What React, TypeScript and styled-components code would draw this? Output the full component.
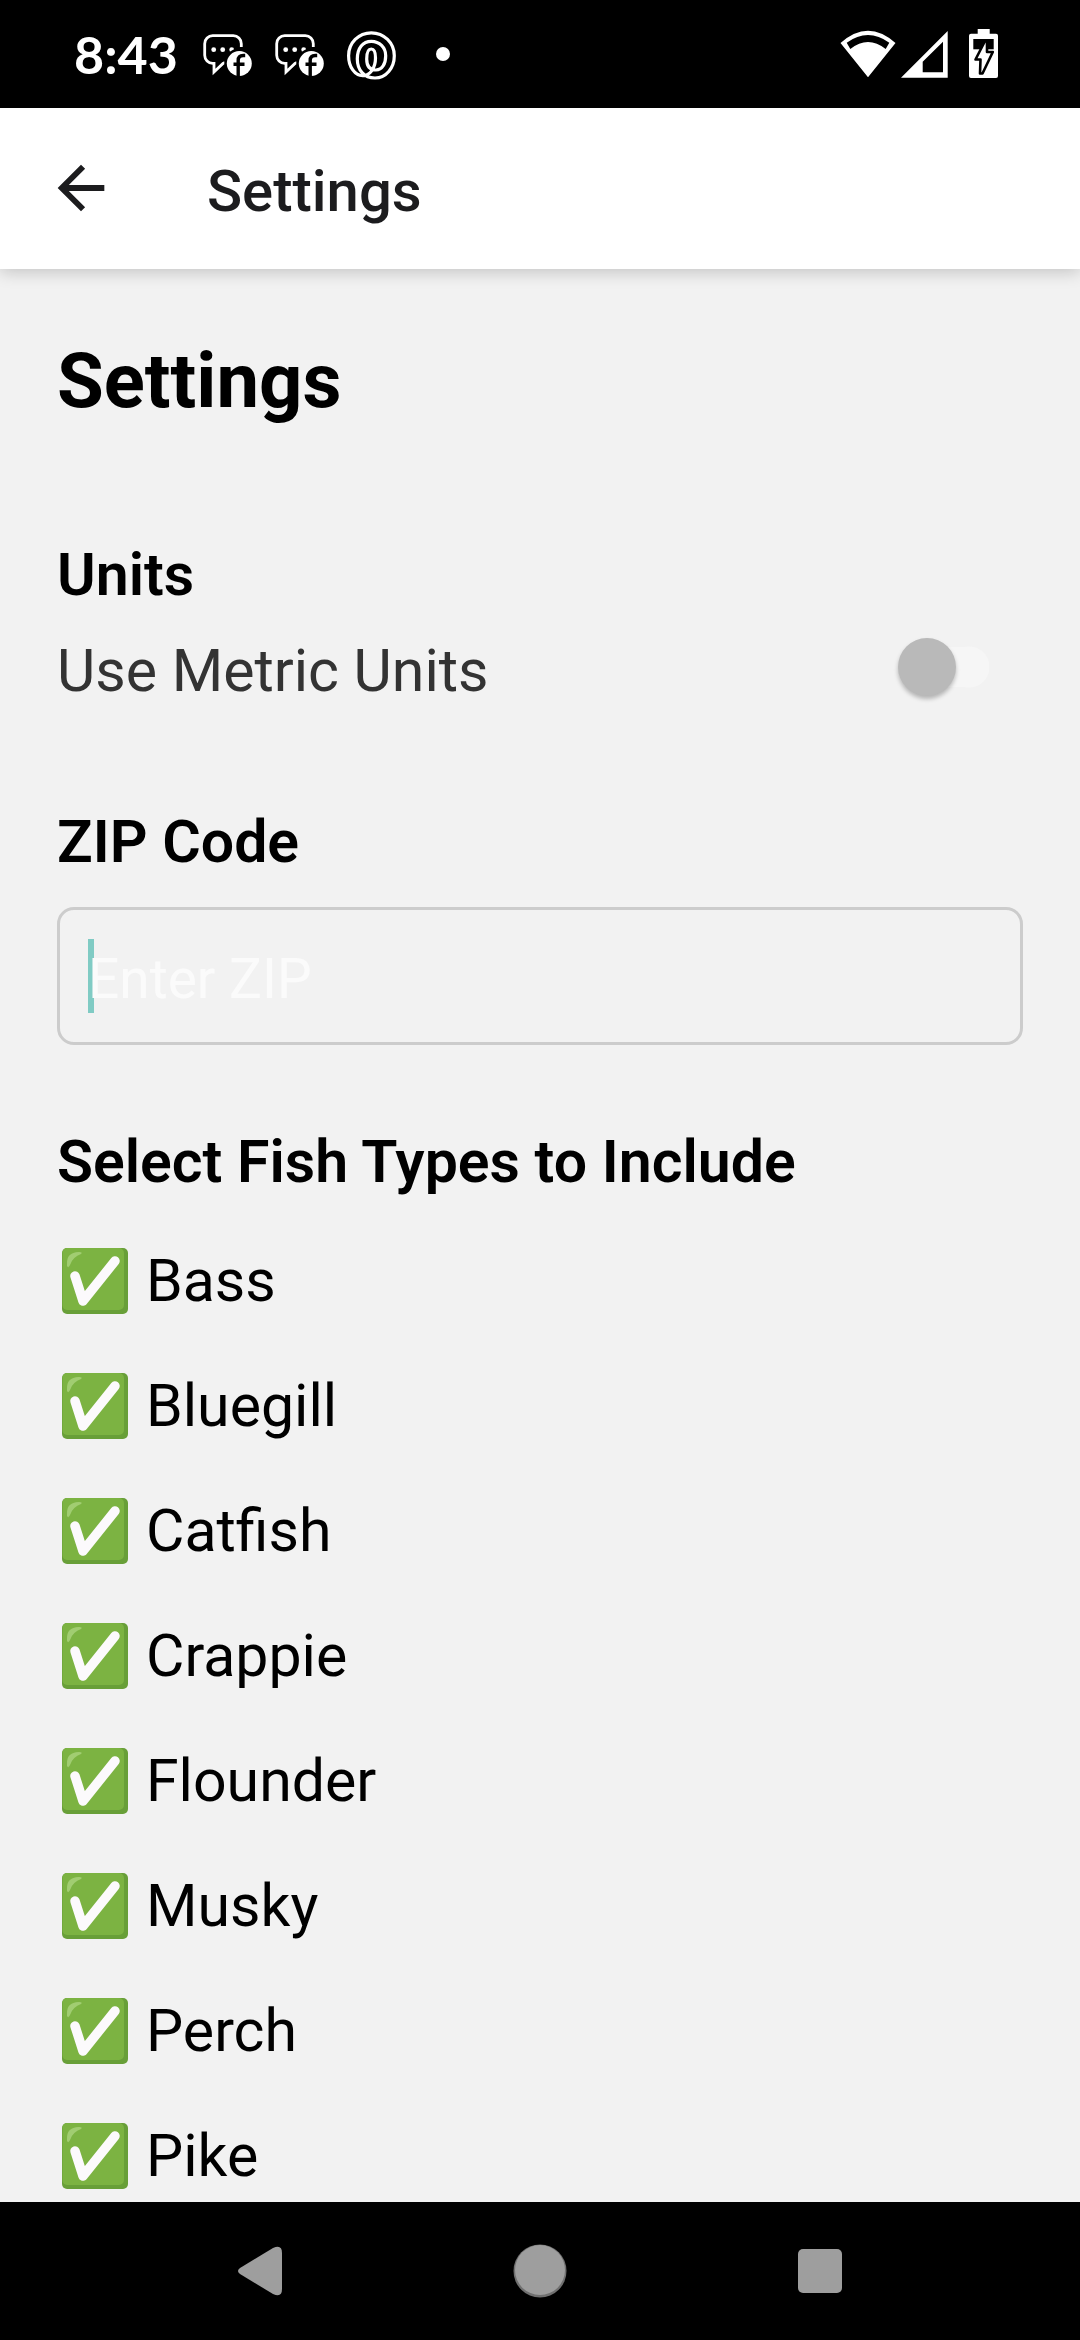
import React, { useState } from "react";
import styled, { createGlobalStyle } from "styled-components";

const GlobalStyle = createGlobalStyle`
  *, *::before, *::after { box-sizing: border-box; }
  body {
    margin: 0;
    background: #f2f2f2;
    font-family: Roboto, "Noto Sans", sans-serif;
  }
  h1, h2, p, ul { margin: 0; padding: 0; }
  svg { display: block; overflow: visible; }
`;

const Screen = styled.div`
  display: flex;
  flex-direction: column;
  min-height: 100vh;
`;

const StatusBar = styled.div`
  display: flex;
  align-items: center;
  justify-content: space-between;
  height: 108px;
  padding: 0 82px 0 74px;
  background: #000;
  color: #fff;
`;

const StatusGroup = styled.div<{ $gap: number }>`
  display: flex;
  align-items: center;
  gap: ${(p) => p.$gap}px;
`;

const Clock = styled.span`
  width: 106px;
  font: 700 52px/60px Lato, Roboto, sans-serif;
  white-space: nowrap;
`;

const MoreDot = styled.span`
  width: 14px;
  height: 14px;
  margin-left: 17px;
  border-radius: 50%;
  background: #fff;
`;

const Header = styled.header`
  display: flex;
  align-items: flex-start;
  gap: 91px;
  height: 161px;
  padding: 40px 46px 0;
  background: #fff;
  color: #1c1c1e;
  box-shadow: 0 3px 16px rgba(0, 0, 0, 0.2);
  z-index: 1;
`;

const IconButton = styled.button`
  display: flex;
  align-items: center;
  justify-content: center;
  height: 80px;
  padding: 0;
  border: 0;
  background: none;
  color: inherit;
`;

const HeaderTitle = styled.p`
  font-size: 58px;
  font-weight: 500;
  line-height: 86px;
`;

const Content = styled.main`
  flex: 1;
  padding: 57px 57px 0;
  color: #000;
`;

const PageTitle = styled.h1`
  font-size: 76px;
  font-weight: 700;
  line-height: 110px;
`;

const Section = styled.section<{ $top: number }>`
  display: flex;
  flex-direction: column;
  margin-top: ${(p) => p.$top}px;
`;

const SectionTitle = styled.h2`
  font-size: 59px;
  font-weight: 600;
  line-height: 70px;
`;

const SettingRow = styled.label`
  display: flex;
  align-items: flex-start;
  justify-content: space-between;
  margin-top: 26px;
  padding-right: 34px;
  color: #333;
  font-size: 59px;
  line-height: 70px;
`;

const Switch = styled.input`
  appearance: none;
  display: flex;
  align-items: center;
  width: 91px;
  height: 62px;
  margin: 0;
  background: radial-gradient(circle at 71px 31px, #f6f6f6 20px, transparent 21px),
    linear-gradient(#f6f6f6, #f6f6f6) 20px 11px / 51px 40px no-repeat;

  &::before {
    content: "";
    width: 58px;
    height: 58px;
    border-radius: 50%;
    background: #b9b9b9;
    box-shadow: 0 3px 4px rgba(0, 0, 0, 0.25);
  }

  &:checked::before {
    margin-left: auto;
    background: #009688;
  }
`;

const Field = styled.div`
  position: relative;
  margin-top: 30px;
`;

const Caret = styled.span`
  position: absolute;
  top: 32px;
  left: 31px;
  width: 6px;
  height: 74px;
  background: #80cbc4;
`;

const TextInput = styled.input`
  position: relative;
  display: block;
  width: 100%;
  height: 138px;
  padding: 6px 28px 0;
  border: 3px solid #cccccc;
  border-radius: 17px;
  outline: 0;
  background: transparent;
  color: #000;
  font: 400 55px Roboto, "Noto Sans", sans-serif;

  &::placeholder {
    color: #fbfbfb;
    opacity: 1;
  }
`;

const FishList = styled.ul`
  display: flex;
  flex-direction: column;
  gap: 55px;
  margin-top: 49px;
  list-style: none;
`;

const FishOption = styled.label`
  display: flex;
  align-items: center;
  gap: 18px;
  padding-left: 5px;
  font-size: 59px;
  line-height: 70px;
`;

const Tick = styled.span`
  position: relative;
  width: 66px;
  height: 66px;
`;

const TickInput = styled.input`
  position: absolute;
  inset: 0;
  width: 100%;
  height: 100%;
  margin: 0;
  opacity: 0;
`;

const NavBar = styled.nav`
  display: grid;
  grid-template-columns: repeat(3, 1fr);
  align-items: center;
  height: 138px;
  padding: 0 120px;
  background: #000;
  color: #9e9e9e;
`;

const MessageIcon = () => (
  <svg width="49" height="50" viewBox="0 0 49 50" fill="none" aria-hidden="true">
    <path
      d="M38.3 18V14.7a8 8 0 0 0-8-8H9.7a8 8 0 0 0-8 8v11.6a8 8 0 0 0 8 8H11V43l9-8.6 2-1"
      stroke="#fff"
      strokeWidth="2.8"
    />
    <circle cx="10.7" cy="20.7" r="2.4" fill="#fff" />
    <circle cx="19.7" cy="20.7" r="2.4" fill="#fff" />
    <circle cx="28.7" cy="20.7" r="2.4" fill="#fff" />
    <circle cx="36.3" cy="34.5" r="15" fill="#000" />
    <circle cx="36.3" cy="34.5" r="12.5" fill="#fff" />
    <path d="M35.2 48V31.5q0-5 5-5h2M30.5 35.3h11" stroke="#000" strokeWidth="3.4" />
  </svg>
);

const LoopIcon = () => (
  <svg width="49" height="50" viewBox="0 0 49 50" fill="none" aria-hidden="true">
    <path
      d="M24.3 3.8C37 3.8 47.3 14 47.3 26.7C47.3 39 39 49 28 49C17 49 10.3 41 10.3 30C10.3 19 16 12.3 24.3 12.3C32.5 12.3 38.7 18.5 38.7 26.7C38.7 35 35 41 29 41C23 41 19.7 37 19.7 30C19.7 23 21.5 20 24.3 20C27 20 28.5 23 28.5 29C28.5 39 23 46.7 15.7 46.7C8 46.7 1.6 38 1.6 26.7C1.6 14 11.6 3.8 24.3 3.8Z"
      stroke="#fff"
      strokeWidth="3.2"
    />
  </svg>
);

const WifiIcon = () => (
  <svg width="56" height="50" viewBox="0 0 56 50" fill="#fff" fillRule="evenodd" aria-hidden="true">
    <path d="M.5 14Q28-10.6 55.5 14L28 48.3ZM6.7 13.7L10.3 20Q28 6 45.7 20L49.3 13.7Q28-1.7 6.7 13.7Z" />
  </svg>
);

const SignalIcon = () => (
  <svg width="47" height="50" viewBox="0 0 47 50" fill="#fff" fillRule="evenodd" aria-hidden="true">
    <path d="M0 48.7L46.7 2V48.7ZM21.7 32.7V43.3H42V12.7Z" />
  </svg>
);

const BatteryIcon = () => (
  <svg width="29" height="50" viewBox="0 0 29 50" aria-hidden="true">
    <path d="M8.7 0h12v4.7H27a2 2 0 0 1 2 2V47a2 2 0 0 1-2 2H2a2 2 0 0 1-2-2V6.7a2 2 0 0 1 2-2h6.7Z" fill="#fff" />
    <path d="M4.3 10H24.7V20.3H4.3Z" fill="#000" />
    <path
      d="M16.3 11.5L6.5 30.5H11.5L11 44.5H13.5L23.8 23H18V11.5Z"
      fill="#fff"
      stroke="#000"
      strokeWidth="2.6"
      strokeLinejoin="round"
    />
  </svg>
);

const BackArrow = () => (
  <svg width="70" height="70" viewBox="0 0 24 24" fill="currentColor" aria-hidden="true">
    <path d="M20 11H7.83l5.59-5.59L12 4l-8 8 8 8 1.41-1.41L7.83 13H20v-2z" />
  </svg>
);

const TickIcon = ({ checked }: { checked: boolean }) => (
  <svg width="66" height="66" viewBox="0 0 66 66" fill="none" aria-hidden="true">
    <rect width="66" height="66" rx="5" fill="#689f38" />
    <path d="M5 0H57a5 5 0 0 1 5 5V57a5 5 0 0 1-5 5H5a5 5 0 0 1-4.5-4.5V5a5 5 0 0 1 4.5-5Z" fill="#7cb342" />
    <path d="M5 16C5 8 8 4.5 17 4Q21 4 19 6Q11 9 8.5 16Q6.5 21 5 18Z" fill="#aed581" opacity="0.75" />
    {checked && (
      <path
        d="M13 28L21 53L53 13"
        stroke="#fcfafc"
        strokeWidth="9.5"
        strokeLinecap="round"
        strokeLinejoin="round"
      />
    )}
  </svg>
);

const fishTypes = ["Bass", "Bluegill", "Catfish", "Crappie", "Flounder", "Musky", "Perch", "Pike"];

export default function App() {
  const [metric, setMetric] = useState(false);
  const [zip, setZip] = useState("");
  const [excluded, setExcluded] = useState<string[]>([]);

  const toggleFish = (name: string) =>
    setExcluded((list) => (list.includes(name) ? list.filter((f) => f !== name) : [...list, name]));

  return (
    <Screen>
      <GlobalStyle />
      <StatusBar>
        <StatusGroup $gap={23}>
          <Clock>8:43</Clock>
          <MessageIcon />
          <MessageIcon />
          <LoopIcon />
          <MoreDot />
        </StatusGroup>
        <StatusGroup $gap={21}>
          <StatusGroup $gap={5}>
            <WifiIcon />
            <SignalIcon />
          </StatusGroup>
          <BatteryIcon />
        </StatusGroup>
      </StatusBar>

      <Header>
        <IconButton type="button" aria-label="Back">
          <BackArrow />
        </IconButton>
        <HeaderTitle>Settings</HeaderTitle>
      </Header>

      <Content>
        <PageTitle>Settings</PageTitle>

        <Section $top={104}>
          <SectionTitle>Units</SectionTitle>
          <SettingRow>
            Use Metric Units
            <Switch
              type="checkbox"
              role="switch"
              checked={metric}
              onChange={(e) => setMetric(e.target.checked)}
            />
          </SettingRow>
        </Section>

        <Section $top={101}>
          <SectionTitle>
            <label htmlFor="zip">ZIP Code</label>
          </SectionTitle>
          <Field>
            {zip === "" && <Caret />}
            <TextInput
              id="zip"
              inputMode="numeric"
              placeholder="Enter ZIP"
              value={zip}
              onChange={(e) => setZip(e.target.value)}
            />
          </Field>
        </Section>

        <Section $top={82}>
          <SectionTitle>Select Fish Types to Include</SectionTitle>
          <FishList>
            {fishTypes.map((name) => {
              const checked = !excluded.includes(name);
              return (
                <li key={name}>
                  <FishOption>
                    <Tick>
                      <TickIcon checked={checked} />
                      <TickInput type="checkbox" checked={checked} onChange={() => toggleFish(name)} />
                    </Tick>
                    {name}
                  </FishOption>
                </li>
              );
            })}
          </FishList>
        </Section>
      </Content>

      <NavBar>
        <IconButton type="button" aria-label="Back">
          <svg width="44" height="50" viewBox="0 0 44 50" fill="currentColor" aria-hidden="true">
            <path d="M2 22L35 2Q44-2 44 7V43Q44 52 35 48L2 28Q-2 25 2 22Z" />
          </svg>
        </IconButton>
        <IconButton type="button" aria-label="Home">
          <svg width="54" height="54" viewBox="0 0 54 54" aria-hidden="true">
            <circle cx="27" cy="27" r="26.5" fill="#707070" />
            <circle cx="27" cy="26" r="25" fill="currentColor" />
          </svg>
        </IconButton>
        <IconButton type="button" aria-label="Recent apps">
          <svg width="44" height="44" viewBox="0 0 44 44" fill="currentColor" aria-hidden="true">
            <rect width="44" height="44" rx="5" />
          </svg>
        </IconButton>
      </NavBar>
    </Screen>
  );
}
